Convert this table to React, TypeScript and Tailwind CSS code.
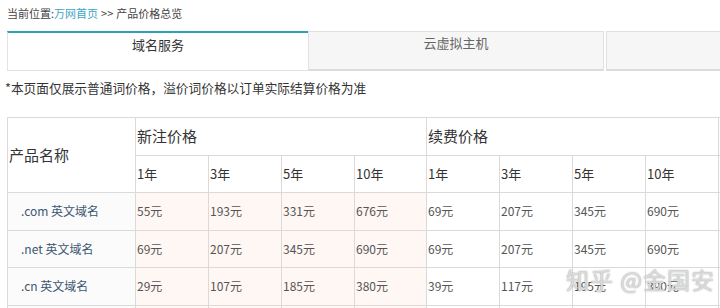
import React from 'react'

// 价格总览页：面包屑 + 标签页 + 价格表

interface PriceRow {
  name: string
  reg: string[]
  renew: string[]
  transfer: string
}

const rows: PriceRow[] = [
  { name: '.com 英文域名', reg: ['55元', '193元', '331元', '676元'], renew: ['69元', '207元', '345元', '690元'], transfer: '49元' },
  { name: '.net 英文域名', reg: ['69元', '207元', '345元', '690元'], renew: ['69元', '207元', '345元', '690元'], transfer: '69元' },
  { name: '.cn 英文域名', reg: ['29元', '107元', '185元', '380元'], renew: ['39元', '117元', '195元', '390元'], transfer: '29元' },
  { name: '.xyz 英文域名', reg: ['9元', '88元', '168元', '318元'], renew: ['79元', '237元', '395元', '790元'], transfer: '79元' },
]

const years = ['1年', '3年', '5年', '10年']

const cell = 'border border-[#dadada] h-[37.5px] align-middle text-left pl-[1px]'

export default function App() {
  return (
    <div className="relative w-[720px] h-[308px] overflow-hidden bg-white font-['Noto_Sans_CJK_SC',sans-serif] text-[#333]">
      {/* Breadcrumb */}
      <div className="pl-[7px] pt-[5px] h-[31px] text-[11px] leading-[16px] text-[#444]">
        当前位置:<span className="text-[#3ba6c6]">万网首页</span>
        <span className="px-[3px]">&gt;&gt;</span>产品价格总览
      </div>

      {/* Tabs */}
      <div className="flex pl-[7px] h-[40px]">
        <div className="w-[301px] shrink-0 border-t-2 border-t-[#2ba3b3] border-l border-l-[#e3e3e3] border-b border-b-[#e3e3e3] bg-white text-center text-[13px] pt-[2px] text-[#333]">
          域名服务
        </div>
        <div className="w-[296px] shrink-0 border border-[#e0e0e0] border-b-2 border-b-[#dcdcdc] bg-[#f6f6f6] text-center text-[13px] pt-[1px] text-[#666]">
          云虚拟主机
        </div>
        <div className="w-[2px] shrink-0" />
        <div className="flex-1 border border-r-0 border-[#e0e0e0] border-b-2 border-b-[#dcdcdc] bg-[#f6f6f6]" />
      </div>

      {/* Notice */}
      <div className="pl-[5px] pt-[8px] h-[46px] text-[12.7px] leading-[18px] text-[#333]">
        *本页面仅展示普通词价格，溢价词价格以订单实际结算价格为准
      </div>

      {/* Price table */}
      <div className="pl-[7px]">
        <table className="table-fixed border-collapse w-[784px]">
          <colgroup>
            <col className="w-[128px]" />
            <col className="w-[73px]" />
            <col className="w-[73px]" />
            <col className="w-[73px]" />
            <col className="w-[72px]" />
            <col className="w-[73px]" />
            <col className="w-[73px]" />
            <col className="w-[73px]" />
            <col className="w-[73px]" />
            <col className="w-[73px]" />
          </colgroup>
          <thead>
            <tr>
              <th rowSpan={2} className={`${cell} font-normal text-[15px]`}>
                产品名称
              </th>
              <th colSpan={4} className={`${cell} font-normal text-[15px]`}>
                新注价格
              </th>
              <th colSpan={4} className={`${cell} font-normal text-[15px]`}>
                续费价格
              </th>
              <th className={`${cell} font-normal text-[15px]`}>转入价格</th>
            </tr>
            <tr>
              {years.map((y) => (
                <th key={'r' + y} className={`${cell} font-normal text-[13px]`}>
                  {y}
                </th>
              ))}
              {years.map((y) => (
                <th key={'n' + y} className={`${cell} font-normal text-[13px]`}>
                  {y}
                </th>
              ))}
              <th className={`${cell} font-normal text-[13px]`}>1年</th>
            </tr>
          </thead>
          <tbody className="text-[12px] text-[#555]">
            {rows.map((r) => (
              <tr key={r.name}>
                <td className={`${cell} bg-[#fbfbfc] !pl-[13px] text-[#3c5670]`}>{r.name}</td>
                {r.reg.map((p, i) => (
                  <td key={'g' + i} className={`${cell} bg-[#fff7f4]`}>
                    {p}
                  </td>
                ))}
                {r.renew.map((p, i) => (
                  <td key={'x' + i} className={cell}>
                    {p}
                  </td>
                ))}
                <td className={cell}>{r.transfer}</td>
              </tr>
            ))}
          </tbody>
        </table>
      </div>

      {/* Watermark */}
      <div className="absolute left-[566px] top-[264px] text-[23px] leading-[30px] text-[#e4e4e4]/90 [text-shadow:0_0_1.5px_#888] tracking-[1px] pointer-events-none">
        知乎 @金国安
      </div>
    </div>
  )
}
